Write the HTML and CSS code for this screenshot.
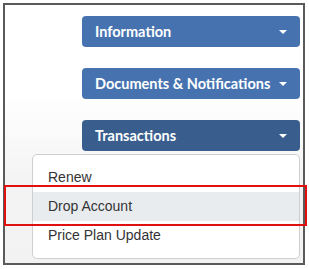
FILE: index.html
```html
<!DOCTYPE html>
<html>
<head>
<meta charset="utf-8">
<link rel="stylesheet" href="styles.css">
</head>
<body>
<div class="frame">
  <div class="nav">
    <button class="nav-btn">Information<span class="caret"></span></button>
    <button class="nav-btn">Documents &amp; Notifications<span class="caret"></span></button>
    <button class="nav-btn active">Transactions<span class="caret"></span></button>
  </div>
  <ul class="menu">
    <li class="item">Renew</li>
    <li class="item hover">Drop Account</li>
    <li class="item">Price Plan Update</li>
  </ul>
  <div class="highlight"></div>
</div>
</body>
</html>
```
FILE: styles.css
```css
html, body { margin: 0; padding: 0; background: #fff; }
.frame {
  position: relative;
  margin: 3px;
  width: 298px;
  height: 258px;
  border: 2px solid #5a5a5a;
  background: linear-gradient(#ffffff 0%, #ffffff 35%, #f3f3f3 70%, #f2f2f2 100%);
  box-sizing: content-box;
}
.nav {
  display: flex;
  flex-direction: column;
  gap: 21px;
  padding: 11px 3px 0 77px;
}
.nav-btn {
  display: flex;
  align-items: center;
  justify-content: space-between;
  height: 31px;
  border: none;
  border-radius: 4px;
  background: #4673b0;
  color: #fff;
  font-family: "Lato", sans-serif;
  font-weight: 700;
  font-size: 14.5px;
  padding: 0 13px 0 13px;
  text-align: left;
}
.nav-btn.active { background: #395e8e; }
.caret {
  width: 0; height: 0;
  border-left: 4px solid transparent;
  border-right: 4px solid transparent;
  border-top: 4px solid #fff;
}
.menu {
  list-style: none;
  margin: 3px 3px 0 27px;
  padding: 8px 0;
  background: #fff;
  border: 1px solid #cfcfcf;
  border-radius: 5px;
}
.item {
  height: 29px;
  line-height: 28px;
  padding-left: 15px;
  font-family: "Liberation Sans", Arial, sans-serif;
  font-size: 14px;
  color: #333;
}
.item.hover { background: #e9ecef; }
.highlight {
  position: absolute;
  left: -1px;
  top: 180px;
  width: 299px;
  height: 37px;
  border: 2px solid #e01010;
}
```
